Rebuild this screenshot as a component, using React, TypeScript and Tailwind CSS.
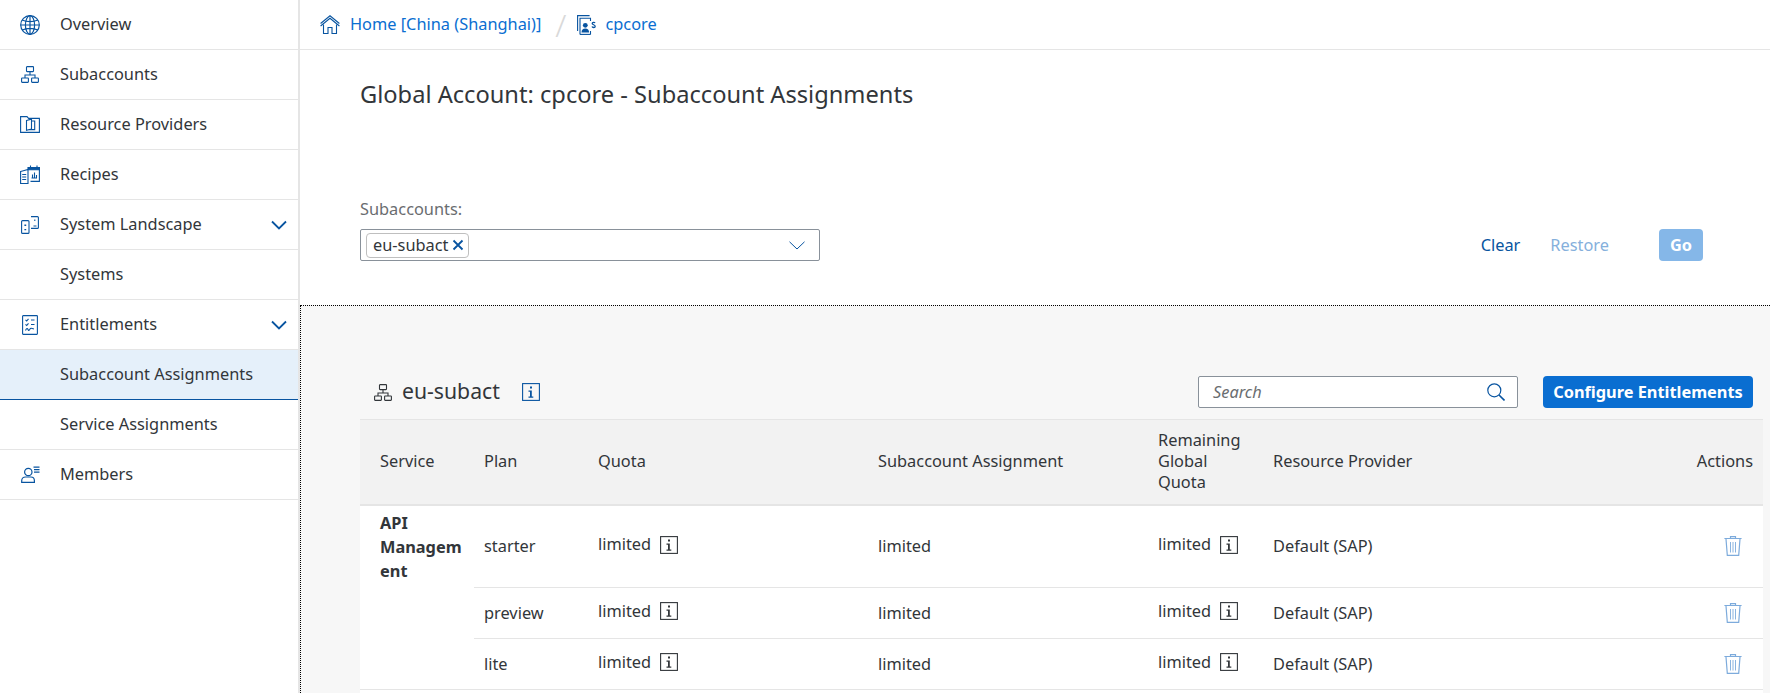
import React from "react";

const B = "#0854a0";
type IP = { c?: string; className?: string };

const Globe = ({ c = B }: IP) => (
  <svg width="20" height="20" viewBox="0 0 20 20" fill="none" stroke={c} strokeWidth="1.2">
    <circle cx="10" cy="10" r="9.3" />
    <ellipse cx="10" cy="10" rx="4.6" ry="9.3" />
    <path d="M10 .7v18.6M.7 10h18.6M2.2 5c2.3 1.1 4.9 1.6 7.8 1.6S15.500 6.100 17.800 5M2.200 15c2.300-1.100 4.900-1.600 7.800-1.600s5.500.5 7.800 1.600" />
  </svg>
);
const Hier = ({ c = B }: IP) => (
  <svg width="18" height="17" viewBox="0 0 18 17" fill="none" stroke={c} strokeWidth="1.1">
    <rect x="5.500" y=".6" width="7" height="5" rx=".6" />
    <path d="M9 5.600v3.400M4 12V9h10v3" />
    <rect x=".6" y="12" width="6.800" height="4.400" rx=".6" />
    <rect x="10.600" y="12" width="6.800" height="4.400" rx=".6" />
  </svg>
);
const Folder = ({ c = B }: IP) => (
  <svg width="20" height="17" viewBox="0 0 20 17" fill="none" stroke={c} strokeWidth="1.1">
    <path d="M.6.6h6.400l1.600 1.800h10.800v14H.6z" />
    <path d="M6.500 4.500l5-1.400v10l-5 1.200zM11.500 5h3.200v8.600h-6" />
  </svg>
);
const Recipe = ({ c = B }: IP) => (
  <svg width="20" height="19" viewBox="0 0 20 19" fill="none" stroke={c} strokeWidth="1.1">
    <path d="M8 2.500h11.400v13.900H10.500" />
    <path d="M8 2.500h11.400v2.300H8z" fill={c} />
    <path d="M10.500 .4v2M17 .4v2M11.500 13h5.500M12.500 12.500V9.500M14.500 12.500V7.500M16.500 12.500V10" />
    <path d="M.6 6.500l7.400-2v14H.6zM2.200 9.500h4M2.200 12h4M2.200 14.500h4" />
  </svg>
);
const Devices = ({ c = B }: IP) => (
  <svg width="18" height="18" viewBox="0 0 18 18" fill="none" stroke={c} strokeWidth="1.1">
    <rect x=".6" y="4.600" width="7.400" height="12.800" rx="1" />
    <path d="M4.300 8.500v1.600M4.300 13v1.300" strokeWidth="1.800" />
    <path d="M10 .6h6.400a1 1 0 0 1 1 1v9.800a1 1 0 0 1-1 1H10M13.800 3.500v1.600M12.500 10h3" />
  </svg>
);
const Checklist = ({ c = B }: IP) => (
  <svg width="16" height="20" viewBox="0 0 16 20" fill="none" stroke={c} strokeWidth="1.100">
    <rect x=".6" y=".6" width="14.800" height="18.800" rx=".6" />
    <path d="M3.500 4.800l1.200 1.200 1.800-2.200M9 5h3.500M3.500 9.300l1.200 1.200 1.800-2.200M9 9.500h3.500M3.500 15.500c1-2.500 2-2.500 2.500-1s1.300 1 2-.5 1.500-.5 4 0" />
  </svg>
);
const Person = ({ c = B }: IP) => (
  <svg width="19" height="17" viewBox="0 0 19 17" fill="none" stroke={c} strokeWidth="1.200">
    <circle cx="7.300" cy="6" r="3.700" />
    <path d="M.7 16.400v-1.700c0-2.200 1.800-3.700 3.800-3.700h5.400c2 0 3.500 1.500 3.500 3.700v1.700z" />
    <path d="M12.500 1.200h6M13 3.700h5.500M13 6.200h5.500" />
  </svg>
);
const Chevron = () => (
  <svg width="16" height="10" viewBox="0 0 16 10" fill="none" stroke={B} strokeWidth="1.800">
    <path d="M1 1.500l7 7 7-7" />
  </svg>
);
const Home = () => (
  <svg width="20" height="19" viewBox="0 0 20 19" fill="none" stroke={B} strokeWidth="1.100">
    <path d="M.6 8.500L10 .8l9.400 7.700M.6 11L10 3.300 19.400 11" />
    <path d="M3.500 9.500v9h4.500v-6h4v6h4.500v-9" />
  </svg>
);
const GlobalAcc = () => (
  <svg width="19" height="20" viewBox="0 0 19 20" fill="none" stroke={B} strokeWidth="1.100">
    <path d="M.6 16V.6h12" />
    <path d="M3 19.400V3.200h10.500v2.800M13.500 16v3.400z" />
    <path d="M3 19.400h10.500" />
    <circle cx="8.300" cy="10.300" r="2.400" fill={B} stroke="none" />
    <path d="M4.500 17.500c0-2.800 1.500-4 3.800-4s3.800 1.200 3.800 4z" fill={B} stroke="none" />
    <path d="M18 8c-.4-.8-2.800-1-2.800.5s3 1 3 2.700-2.700 1.600-3.200.4" strokeWidth="1.300" />
  </svg>
);
const Info = ({ c = "#32363a" }: IP) => (
  <svg width="18" height="18" viewBox="0 0 18 18" fill="none">
    <rect x=".6" y=".6" width="16.800" height="16.800" stroke={c} strokeWidth="1.100" />
    <path d="M8 3.500h2v2H8zM6.500 7.500h3.300v6h1.500v1.200H6.500v-1.200h1.500V8.700H6.500z" fill={c} />
  </svg>
);
const Trash = () => (
  <svg width="18" height="20" viewBox="0 0 18 20" fill="none" stroke="#7dabdc" strokeWidth="1.200">
    <path d="M.4 2.500h17.200M6.500 2.300V.7h5v1.600" />
    <path d="M2 3l1.300 16.400h11.400L16 3" />
    <path d="M6.500 6v10.500M9 6v10.500M11.500 6v10.500" strokeWidth=".9" />
  </svg>
);
const Search = () => (
  <svg width="18" height="18" viewBox="0 0 18 18" fill="none" stroke={B} strokeWidth="1.200">
    <circle cx="7.300" cy="7.300" r="6.500" />
    <path d="M12 12l5.500 5.500" strokeWidth="1.600" />
  </svg>
);

const nav: { label: string; icon?: React.ReactNode; chevron?: boolean; active?: boolean }[] = [
  { label: "Overview", icon: <Globe /> },
  { label: "Subaccounts", icon: <Hier /> },
  { label: "Resource Providers", icon: <Folder /> },
  { label: "Recipes", icon: <Recipe /> },
  { label: "System Landscape", icon: <Devices />, chevron: true },
  { label: "Systems" },
  { label: "Entitlements", icon: <Checklist />, chevron: true },
  { label: "Subaccount Assignments", active: true },
  { label: "Service Assignments" },
  { label: "Members", icon: <Person /> },
];

const Limited = () => (
  <div className="mb-[3px] flex items-center gap-[9px]">
    <span>limited</span>
    <Info />
  </div>
);

const plans = [
  { plan: "starter", h: "h-[83px]" },
  { plan: "preview", h: "h-[51px]" },
  { plan: "lite", h: "h-[51px]" },
];

export default function App() {
  return (
    <div className="flex h-[693px] w-full overflow-hidden bg-white font-['Noto_Sans',sans-serif] text-[16.35px] text-[#32363a]">
      <aside className="w-[300px] shrink-0 border-r-2 border-[#e5e5e5]">
        {nav.map((n) => (
          <div
            key={n.label}
            className={`flex h-[50px] items-center border-b ${
              n.active ? "border-[#0854a0] bg-[#e5f0fa]" : "border-[#e5e5e5]"
            }`}
          >
            <div className="flex w-[60px] shrink-0 justify-center">{n.icon}</div>
            <span className="mb-[1px] flex-1">{n.label}</span>
            {n.chevron && (
              <div className="mr-[11px]">
                <Chevron />
              </div>
            )}
          </div>
        ))}
      </aside>

      <main className="flex min-w-0 flex-1 flex-col">
        <header className="flex h-[50px] shrink-0 items-center border-b border-[#e5e5e5] pl-[20px] text-[#0a6ed1]">
          <Home />
          <span className="mb-[1px] ml-[10px]">Home [China (Shanghai)]</span>
          <span className="ml-[14px] mr-[11px] text-[32px] font-light leading-none text-[#d9d9d9]">/</span>
          <GlobalAcc />
          <span className="mb-[1px] ml-[9px]">cpcore</span>
        </header>

        <section className="h-[255px] shrink-0 pl-[60px] pr-[67px] pt-[30px]">
          <h1 className="text-[23.65px] leading-[28px]">Global Account: cpcore - Subaccount Assignments</h1>
          <div className="mt-[91px] leading-[20px] text-[#6a6d70]">Subaccounts:</div>
          <div className="mt-[10px] flex items-center justify-between">
            <div className="flex h-[32px] w-[460px] items-center justify-between rounded-[2px] border border-[#89919a] pl-[5px] pr-[14px]">
              <div className="flex h-[25px] items-center gap-[4px] rounded-[4px] border border-[#bfbfbf] pl-[6px] pr-[4px]">
                <span>eu-subact</span>
                <svg width="12" height="12" viewBox="0 0 12 12" stroke={B} strokeWidth="1.800" fill="none">
                  <path d="M1.500 1.500l9 9M10.500 1.500l-9 9" />
                </svg>
              </div>
              <svg width="16" height="9" viewBox="0 0 16 9" fill="none" stroke={B} strokeWidth="1">
                <path d="M.5.8L8 8l7.500-7.200" />
              </svg>
            </div>
            <div className="flex items-center">
              <span className="text-[#0854a0]">Clear</span>
              <span className="ml-[30px] text-[#85b0dc]">Restore</span>
              <span className="ml-[50px] flex h-[32px] w-[44px] items-center justify-center rounded-[4px] bg-[#85b7e8] font-bold text-white">
                Go
              </span>
            </div>
          </div>
        </section>

        <section className="min-h-0 flex-1 border-l border-t border-dotted border-black bg-[#f7f7f7] pl-[59px] pr-[7px] pt-[70px]">
          <div className="flex h-[32px] items-center pr-[10px]">
            <div className="ml-[14px]">
              <Hier c="#32363a" />
            </div>
            <span className="mb-[2px] ml-[10px] text-[21.2px]">eu-subact</span>
            <div className="ml-[22px]">
              <Info c={B} />
            </div>
            <div className="ml-auto flex h-[32px] w-[320px] items-center justify-between rounded-[2px] border border-[#89919a] bg-white pl-[14px] pr-[12px]">
              <span className="italic text-[#6a6d70]">Search</span>
              <Search />
            </div>
            <div className="ml-[25px] flex h-[32px] w-[210px] items-center justify-center rounded-[4px] bg-[#0a6ed1] font-bold text-white">
              Configure Entitlements
            </div>
          </div>

          <table className="mt-[11px] w-full table-fixed border-collapse bg-white">
            <colgroup>
              <col className="w-[114px]" />
              <col className="w-[114px]" />
              <col className="w-[280px]" />
              <col className="w-[280px]" />
              <col className="w-[115px]" />
              <col />
              <col className="w-[100px]" />
            </colgroup>
            <thead>
              <tr className="h-[85px] border-y border-b-2 border-[#e5e5e5] bg-[#f2f2f2] text-left font-normal">
                <th className="pl-[20px] font-normal">Service</th>
                <th className="pl-[10px] font-normal">Plan</th>
                <th className="pl-[10px] font-normal">Quota</th>
                <th className="pl-[10px] font-normal">Subaccount Assignment</th>
                <th className="pl-[10px] pr-[10px] font-normal leading-[21px]">Remaining Global Quota</th>
                <th className="pl-[10px] font-normal">Resource Provider</th>
                <th className="pr-[10px] text-right font-normal">Actions</th>
              </tr>
            </thead>
            <tbody>
              {plans.map((p, i) => (
                <tr key={p.plan} className={`${p.h} border-b border-[#e5e5e5]`}>
                  {i === 0 && (
                    <td rowSpan={3} className="bg-white pl-[20px] pr-[8px] pt-[5px] align-top font-bold leading-[24px] [overflow-wrap:anywhere]">
                      API Management
                    </td>
                  )}
                  <td className="pl-[10px]">{p.plan}</td>
                  <td className="pl-[10px]">
                    <Limited />
                  </td>
                  <td className="pl-[10px]">limited</td>
                  <td className="pl-[10px]">
                    <Limited />
                  </td>
                  <td className="pl-[10px]">Default (SAP)</td>
                  <td className="pr-[21px]">
                    <div className="flex justify-end">
                      <Trash />
                    </div>
                  </td>
                </tr>
              ))}
            </tbody>
          </table>
          <div className="h-[10px] bg-white" />
        </section>
      </main>
    </div>
  );
}
